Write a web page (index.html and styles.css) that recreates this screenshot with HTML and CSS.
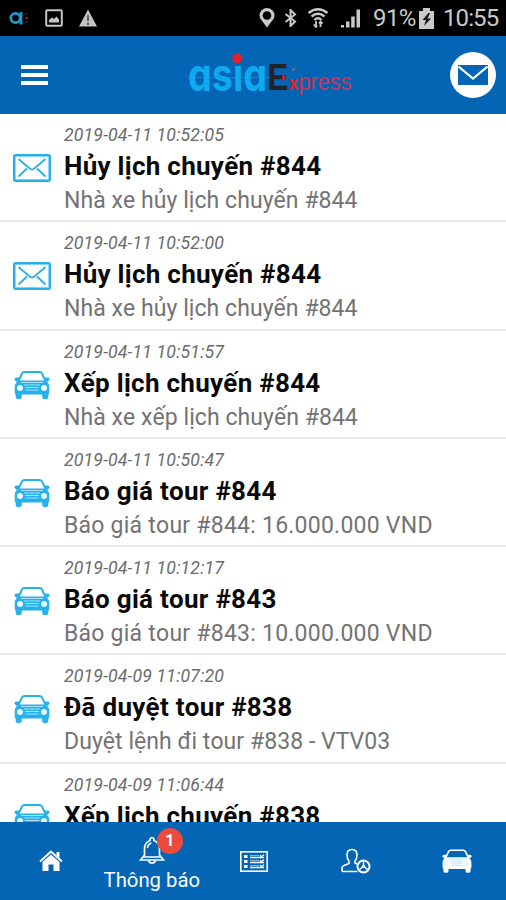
FILE: index.html
```html
<!DOCTYPE html>
<html lang="vi">
<head>
  <meta charset="UTF-8" />
  <meta name="viewport" content="width=device-width, initial-scale=1.0"/>
  <title>asiaExpress - Thông báo</title>
  <link rel="stylesheet" href="styles.css">
</head>
<body>
  <svg class="hidden">
    <symbol id="mail" viewBox="0 0 38 28">
      <rect x="1.2" y="1.2" width="35.6" height="25.6" rx="1.5" fill="#e4f6fd" stroke="#27b0e8" stroke-width="2.4"/>
      <rect x="3.4" y="3.4" width="31.2" height="21.2" fill="#fff"/>
      <path d="M5.5 5L17 14.800Q19 16.300 21 14.800L32.500 5M5.500 22.500L14 14.500M32.500 22.500L24 14.500" fill="none" stroke="#2fb1e6" stroke-width="1.900"/>
    </symbol>
    <symbol id="car" viewBox="0 0 36 28">
      <path d="M4.500 10L8 2.500Q8.700 1 10.500 1H25.500Q27.300 1 28 2.500L31.500 10" fill="none" stroke="currentColor" stroke-width="1.900"/>
      <path d="M0.300 8.500Q0.300 6.500 2.500 6.500H4.800L5.500 9.500L2.500 11ZM35.700 8.500Q35.700 6.500 33.500 6.500H31.200L30.500 9.500L33.500 11Z" fill="currentColor"/>
      <path d="M4.500 9.500H31.500L34 12Q35.300 13.500 35.300 16V21Q35.300 23 34.300 23.500V26Q34.300 28 32.500 28H30Q28.200 28 28.200 26V23.500H7.800V26Q7.800 28 6 28H3.500Q1.700 28 1.700 26V23.500Q0.700 23 0.700 21V16Q0.700 13.500 2 12Z" fill="currentColor"/>
      <path class="car-cut" d="M7 11.500H29M10 14H26M11 16.500H25M11.500 19H24.500" fill="none" stroke-width="1"/>
      <ellipse class="car-lamp" cx="6" cy="17" rx="3" ry="2.900"/>
      <ellipse class="car-lamp" cx="30" cy="17" rx="3" ry="2.900"/>
    </symbol>
  </svg>

  <div class="status-bar">
    <div class="status-left">
      <svg width="20" height="18" viewBox="0 0 20 18">
        <circle cx="6.500" cy="9" r="4.700" fill="none" stroke="#2597c6" stroke-width="2.800"/>
        <path d="M12 3V15.500" stroke="#2597c6" stroke-width="2.800"/>
        <path d="M17.500 4V6M17.500 12V14" stroke="#333" stroke-width="1.500"/>
        <circle cx="17.500" cy="9" r="1.300" fill="#9b2432"/>
      </svg>
      <svg width="18" height="18" viewBox="0 0 18 18">
        <rect x="1.200" y="1.200" width="15.600" height="15.600" rx="1" fill="none" stroke="#c4c4c4" stroke-width="2"/>
        <path d="M4 13.500V11L7 8.500L9 10L11.500 7.500L14 10.500V13.500Z" fill="#c4c4c4"/>
      </svg>
      <svg width="18" height="18" viewBox="0 0 18 18">
        <path d="M9 0.500L18 17.500H0Z" fill="#c4c4c4"/>
        <path d="M9 6V12M9 13.500V16" stroke="#444" stroke-width="1.600"/>
      </svg>
    </div>
    <div class="status-right">
      <svg width="16" height="20" viewBox="0 0 16 20">
        <path d="M8 19.500L2 11.500Q0.500 9.500 0.500 7.500A7.500 7.500 0 0 1 15.500 7.500Q15.500 9.500 14 11.500Z" fill="#c9c9c9"/>
        <circle cx="8" cy="7.500" r="4.300" fill="#000"/>
      </svg>
      <svg class="bluetooth" width="13" height="18" viewBox="0 0 13 18">
        <path d="M1.500 5L11 12.500L6.500 17V1L11 5.500L1.500 13" fill="none" stroke="#c9c9c9" stroke-width="2"/>
      </svg>
      <svg class="wifi" width="20" height="20" viewBox="0 0 20 20">
        <path d="M0.500 5Q10 -2.500 19.500 5M3.500 8.500Q10 3 16.500 8.500M6.500 12Q10 8.500 13.500 12" fill="none" stroke="#c9c9c9" stroke-width="2.400"/>
        <path d="M8 13V19M5.800 16.500L8 19L9 17.500M12.500 19V13.500M11 15.500L12.500 13.500L14.500 15.500" fill="none" stroke="#c9c9c9" stroke-width="1.800"/>
      </svg>
      <svg class="signal" width="20" height="19" viewBox="0 0 20 19">
        <path d="M0 18.500V16H3V18.500ZM5 18.500V12.500H8.500V18.500ZM10.200 18.500V7.500H13.700V18.500ZM15.500 18.500V0.500H19V18.500Z" fill="#c9c9c9"/>
      </svg>
      <span class="battery-text">91%</span>
      <svg class="battery" width="15" height="21" viewBox="0 0 15 21">
        <path d="M0 3H4V0H11V3H15V21H0Z" fill="#c9c9c9"/>
        <path d="M9.500 5L3.500 12H7L5 18L12 10.500H8.500L11 5Z" fill="#111"/>
      </svg>
      <span class="clock">10:55</span>
    </div>
  </div>

  <header class="header">
    <button class="menu-btn" type="button" aria-label="Menu">
      <span></span><span></span><span></span>
    </button>
    <svg class="logo" width="166" height="60" viewBox="0 0 166 60">
      <text class="logo-asia" x="0" y="45.500" textLength="79" lengthAdjust="spacingAndGlyphs">asia</text>
      <circle cx="49.300" cy="13.500" r="5" fill="#e81f27"/>
      <path d="M0 32.500H95" stroke="#5c87b5" stroke-width="0.600"/>
      <text class="logo-e" x="79.500" y="45" textLength="21" lengthAdjust="spacingAndGlyphs">E</text>
      <path d="M94.500 29L98 32.500L94.500 36Z" fill="#e81f27"/>
      <circle cx="105.500" cy="24.500" r="1.500" fill="#64748b"/>
      <text class="logo-x" x="100.500" y="45" textLength="10" lengthAdjust="spacingAndGlyphs">x</text>
      <text class="logo-press" x="110.500" y="45" textLength="53" lengthAdjust="spacingAndGlyphs">press</text>
    </svg>
    <button class="mail-btn" type="button" aria-label="Tin nhắn">
      <svg width="30" height="20" viewBox="0 0 30 20">
        <rect width="30" height="20" fill="#0365b3"/>
        <path d="M0.500 1.500L15 13.500L29.500 1.500" fill="none" stroke="#fff" stroke-width="2.200"/>
      </svg>
    </button>
  </header>

  <main class="list">
    <div class="item">
      <svg class="item-icon mail"><use href="#mail"/></svg>
      <div class="item-body">
        <div class="date">2019-04-11 10:52:05</div>
        <div class="title">Hủy lịch chuyến #844</div>
        <div class="desc">Nhà xe hủy lịch chuyến #844</div>
      </div>
    </div>
    <div class="item">
      <svg class="item-icon mail"><use href="#mail"/></svg>
      <div class="item-body">
        <div class="date">2019-04-11 10:52:00</div>
        <div class="title">Hủy lịch chuyến #844</div>
        <div class="desc">Nhà xe hủy lịch chuyến #844</div>
      </div>
    </div>
    <div class="item">
      <svg class="item-icon car"><use href="#car"/></svg>
      <div class="item-body">
        <div class="date">2019-04-11 10:51:57</div>
        <div class="title">Xếp lịch chuyến #844</div>
        <div class="desc">Nhà xe xếp lịch chuyến #844</div>
      </div>
    </div>
    <div class="item">
      <svg class="item-icon car"><use href="#car"/></svg>
      <div class="item-body">
        <div class="date">2019-04-11 10:50:47</div>
        <div class="title">Báo giá tour #844</div>
        <div class="desc price">Báo giá tour #844: 16.000.000 VND</div>
      </div>
    </div>
    <div class="item">
      <svg class="item-icon car"><use href="#car"/></svg>
      <div class="item-body">
        <div class="date">2019-04-11 10:12:17</div>
        <div class="title">Báo giá tour #843</div>
        <div class="desc price">Báo giá tour #843: 10.000.000 VND</div>
      </div>
    </div>
    <div class="item">
      <svg class="item-icon car"><use href="#car"/></svg>
      <div class="item-body">
        <div class="date">2019-04-09 11:07:20</div>
        <div class="title">Đã duyệt tour #838</div>
        <div class="desc">Duyệt lệnh đi tour #838 - VTV03</div>
      </div>
    </div>
    <div class="item">
      <svg class="item-icon car"><use href="#car"/></svg>
      <div class="item-body">
        <div class="date">2019-04-09 11:06:44</div>
        <div class="title">Xếp lịch chuyến #838</div>
      </div>
    </div>
  </main>

  <nav class="tabs">
    <a class="tab">
      <svg width="24" height="22" viewBox="0 0 24 22">
        <path d="M1 11.500L12 1.500L23 11.500" fill="none" stroke="#fff" stroke-width="2"/>
        <path d="M17.500 2H20.500V8L17.500 5.500Z" fill="#fff"/>
        <path d="M3.500 12L12 4.500L20.500 12V21H14.500V14.500H9.500V21H3.500Z" fill="#fff"/>
      </svg>
    </a>
    <a class="tab active">
      <span class="bell">
        <svg width="26" height="28" viewBox="0 0 26 28">
          <path d="M11 4.500Q11 1.500 13 1.500T15 4.500Q20.500 6.500 20.500 13V19L24.500 24H1.500L5.500 19V13Q5.500 6.500 11 4.500Z" fill="none" stroke="#fff" stroke-width="1.700"/>
          <path d="M4 21H22M9.500 24.500Q10 27 13 27T16.500 24.500M8.500 12Q9 8 12.500 7" fill="none" stroke="#fff" stroke-width="1.600"/>
        </svg>
        <span class="badge">1</span>
      </span>
      <span class="tab-label">Thông báo</span>
    </a>
    <a class="tab">
      <svg class="tab-list" width="28" height="21" viewBox="0 0 28 21">
        <rect x="0.800" y="0.800" width="26.400" height="19.400" fill="none" stroke="#fff" stroke-width="1.600"/>
        <path d="M4 5.500H7.500M4 10.500H7.500M4 15.500H7.500" stroke="#fff" stroke-width="2.800"/>
        <path d="M10 6.500H24M10 11.500H24M10 16.500H24" stroke="#fff" stroke-width="1.500"/>
        <path d="M10 4.500H19M10 9.500H19M10 14.500H19" stroke="#a9cbea" stroke-width="0.800"/>
        <path d="M20 4.200L21.500 5.700L24 3.700M20 9.200L21.500 10.700L24 8.700M20 14.200L21.500 15.700L24 13.700" fill="none" stroke="#fff" stroke-width="1.300"/>
      </svg>
    </a>
    <a class="tab">
      <svg class="tab-driver" width="30" height="26" viewBox="0 0 30 26">
        <path d="M16.500 23.500H2Q1 23.500 1 22V20Q1 18.500 3 17.500L8 15.500V13Q6 11 6 7Q6 1.500 11 1.500T16 7Q16 11 14 13V15L16 16" fill="none" stroke="#fff" stroke-width="1.600"/>
        <circle cx="22.500" cy="18.500" r="6" fill="none" stroke="#fff" stroke-width="1.900"/>
        <path d="M22.500 13V18L18 22M22.500 18L27 22" fill="none" stroke="#fff" stroke-width="1.500"/>
        <circle cx="22.500" cy="18.200" r="1.500" fill="#fff"/>
      </svg>
    </a>
    <a class="tab">
      <svg class="tab-car"><use href="#car"/></svg>
    </a>
  </nav>
</body>
</html>
```

FILE: styles.css
```css
* {
  box-sizing: border-box;
}
body {
  margin: 0;
  width: 506px;
  height: 900px;
  display: flex;
  flex-direction: column;
  overflow: hidden;
  background: #fff;
  font-family: Roboto, sans-serif;
  font-kerning: none;
}
svg {
  flex-shrink: 0;
}
.hidden {
  display: none;
}
button {
  padding: 0;
  border: 0;
  background: none;
}

/* status bar */
.status-bar {
  height: 36px;
  flex-shrink: 0;
  padding: 0 7px 0 9px;
  display: flex;
  align-items: center;
  justify-content: space-between;
  background: #000;
  color: #c9c9c9;
  font-size: 24px;
}
.status-left, .status-right {
  display: flex;
  align-items: center;
}
.status-left {
  gap: 16px;
}
.bluetooth {
  margin-left: 9px;
}
.wifi {
  margin-left: 11px;
}
.signal {
  margin-left: 13px;
}
.battery-text {
  width: 42px;
  margin-left: 12px;
  white-space: nowrap;
  letter-spacing: -0.6px;
}
.battery {
  margin-left: 4px;
}
.clock {
  width: 56px;
  margin-left: 9px;
  white-space: nowrap;
  letter-spacing: -0.9px;
}

/* header */
.header {
  height: 78px;
  flex-shrink: 0;
  padding: 0 10px 0 21px;
  display: flex;
  align-items: center;
  justify-content: space-between;
  background: #0365b3;
}
.menu-btn {
  width: 27px;
  display: flex;
  flex-direction: column;
  gap: 4px;
}
.menu-btn span {
  height: 4px;
  background: #fff;
}
.logo {
  margin-left: 44px;
}
.logo-asia {
  font: 700 45px Inter, sans-serif;
  font-feature-settings: "cv11";
  fill: #0eaaf0;
}
.logo-e {
  font: 700 36px "Liberation Sans", sans-serif;
  fill: #222326;
}
.logo-x {
  font: 700 20px "Liberation Sans", sans-serif;
  fill: #e81f27;
}
.logo-press {
  font: 400 24px "Liberation Sans", sans-serif;
  fill: #c93459;
}
.mail-btn {
  width: 46px;
  height: 46px;
  border-radius: 50%;
  display: flex;
  align-items: center;
  justify-content: center;
  background: #fff;
}

/* notifications */
.list {
  flex: 1;
  min-height: 0;
  overflow: hidden;
}
.item {
  height: 108.3px;
  padding: 9px 0 0 13px;
  display: flex;
  border-bottom: 2px solid #e9e9e9;
}
.item-icon {
  width: 38px;
  height: 28px;
  margin: 31px 13px 0 0;
}
.item-icon.car {
  width: 36px;
  margin: 31px 14px 0 1px;
  color: #25b1ea;
}
.car-cut {
  stroke: #a9e0f7;
}
.car-lamp {
  fill: #e8f8ff;
}
.item-body {
  white-space: nowrap;
}
.date {
  height: 24px;
  line-height: 24px;
  font-size: 17.7px;
  font-style: italic;
  letter-spacing: 0.15px;
  color: #6b6b6b;
}
.title {
  height: 38px;
  line-height: 38px;
  font-size: 26px;
  font-weight: 700;
  letter-spacing: 0.28px;
  color: #0a0a0a;
}
.desc {
  height: 30px;
  line-height: 32px;
  font-size: 23px;
  letter-spacing: 0.06px;
  color: #737373;
}
.desc.price {
  letter-spacing: 0.24px;
}

/* bottom tabs */
.tabs {
  height: 78px;
  flex-shrink: 0;
  display: flex;
  background: #0365b3;
}
.tab {
  width: 20%;
  display: flex;
  flex-direction: column;
  align-items: center;
  justify-content: center;
  color: #fff;
}
.tab.active {
  justify-content: flex-start;
  padding-top: 14px;
}
.bell {
  position: relative;
  height: 28px;
}
.badge {
  position: absolute;
  left: 18px;
  top: -8px;
  width: 26px;
  height: 26px;
  border-radius: 50%;
  background: #e94b3c;
  font-size: 16px;
  font-weight: 700;
  line-height: 26px;
  text-align: center;
}
.tab-label {
  line-height: 32px;
  font-size: 20.3px;
}
.tab-list {
  margin-left: 2px;
}
.tab-driver {
  margin-left: 3px;
}
.tab-car {
  width: 30px;
  height: 24px;
  margin-left: 3px;
}
.tab .car-cut {
  stroke: #6ea6d6;
}
.tab .car-lamp {
  fill: #0365b3;
}
```
